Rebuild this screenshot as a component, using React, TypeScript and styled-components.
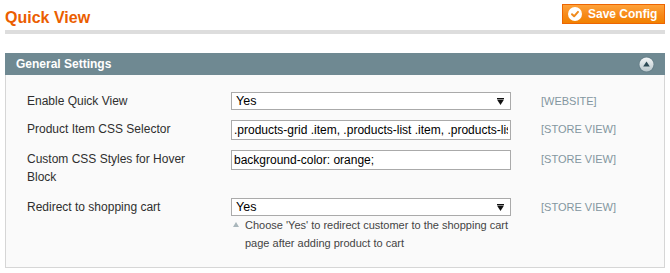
import React from "react";
import styled, { createGlobalStyle } from "styled-components";

const Global = createGlobalStyle`
  html, body { margin: 0; padding: 0; background: #ffffff; }
  body { font-family: "Liberation Sans", Arial, sans-serif; font-size: 12px; color: #2f2f2f; }
`;

const Page = styled.div`
  padding: 0 5px;
`;

const TitleBar = styled.div`
  display: flex;
  justify-content: space-between;
  align-items: flex-start;
  height: 30px;
`;

const Title = styled.h3`
  margin: 0;
  padding-top: 9px;
  font-size: 16px;
  line-height: 18px;
  font-weight: bold;
  color: #eb5e00;
`;

const SaveButton = styled.button`
  margin-top: 4px;
  height: 20px;
  width: 103px;
  box-sizing: border-box;
  display: flex;
  align-items: center;
  gap: 6px;
  padding: 0 0 0 5px;
  border: 1px solid #ed6502;
  background: linear-gradient(to bottom, #fea23a 0%, #f7891a 55%, #f18200 100%);
  color: #ffffff;
  font-family: "Liberation Sans", Arial, sans-serif;
  font-size: 12px;
  font-weight: bold;
  cursor: pointer;
`;

const Rule = styled.div`
  height: 4px;
  background: #dddddd;
`;

const Section = styled.div`
  margin-top: 19px;
`;

const SectionHead = styled.div`
  height: 22px;
  display: flex;
  align-items: center;
  justify-content: space-between;
  padding: 0 10px 0 11px;
  background: #6f8992;
  color: #ffffff;
  font-weight: bold;
  font-size: 12px;
`;

const Fieldset = styled.div`
  background: #fafafa;
  border: 1px solid #d6d6d6;
  border-top: none;
  padding: 17px 0 15px 21px;
  display: grid;
  grid-template-columns: 204px 280px 30px auto;
  row-gap: 10px;
  align-items: start;
`;

const Label = styled.div<{ $wrapped?: boolean }>`
  line-height: 18px;
  font-size: 12px;
  color: #2f2f2f;
  padding-right: 20px;
  padding-bottom: ${(p) => (p.$wrapped ? "2px" : "0")};
`;

const Value = styled.div`
  grid-column: 2;
  display: flex;
  flex-direction: column;
`;

const Scope = styled.div`
  grid-column: 4;
  font-size: 11px;
  line-height: 18px;
  color: #8396a0;
`;

const SelectBox = styled.div`
  height: 18px;
  box-sizing: border-box;
  border: 1px solid #aaaaaa;
  background: #ffffff;
  display: flex;
  align-items: center;
  justify-content: space-between;
  padding: 0 6px 0 4px;
  font-size: 12.5px;
  color: #000000;
`;

const TextInput = styled.input`
  height: 20px;
  width: 280px;
  box-sizing: border-box;
  border: 1px solid #aaaaaa;
  background: #ffffff;
  padding: 0 2px;
  margin: 0;
  font-family: "Liberation Sans", Arial, sans-serif;
  font-size: 12px;
  color: #000000;
  outline: none;
`;

const Note = styled.div`
  display: flex;
  gap: 6px;
  padding-left: 2px;
  font-size: 11px;
  line-height: 18px;
  color: #444444;
`;

const NoteArrow = styled.svg`
  flex: none;
  margin-top: 6px;
`;

const Arrow = () => (
  <svg width="7" height="7" viewBox="0 0 7 7">
    <rect x="0" y="0" width="7" height="1" fill="#111" />
    <path d="M0 1.5 H7 L3.5 7 Z" fill="#111" />
  </svg>
);

const CheckIcon = () => (
  <svg width="14" height="14" viewBox="0 0 14 14">
    <circle cx="7" cy="7" r="7" fill="#ffffff" />
    <path d="M4 7.2 L6.1 9.3 L10 4.9" fill="none" stroke="#f08a1c" strokeWidth="2" strokeLinecap="round" strokeLinejoin="round" />
  </svg>
);

const CollapseIcon = () => (
  <svg width="17" height="17" viewBox="0 0 17 17">
    <defs>
      <linearGradient id="cg" x1="0" y1="0" x2="0" y2="1">
        <stop offset="0" stopColor="#f4f7f8" />
        <stop offset="1" stopColor="#b8c6cb" />
      </linearGradient>
    </defs>
    <circle cx="8.5" cy="8.5" r="8" fill="#5f7a84" opacity="0.5" />
    <circle cx="8.5" cy="8.5" r="7" fill="url(#cg)" />
    <path d="M5.2 10.5 H11.8 L8.5 5.5 Z" fill="#2c4a55" />
  </svg>
);

type Row = {
  label: string;
  scope: string;
  kind: "select" | "input";
  value: string;
  wrapped?: boolean;
  note?: string;
};

const rows: Row[] = [
  { label: "Enable Quick View", scope: "[WEBSITE]", kind: "select", value: "Yes" },
  {
    label: "Product Item CSS Selector",
    scope: "[STORE VIEW]",
    kind: "input",
    value: ".products-grid .item, .products-list .item, .products-list .item",
  },
  {
    label: "Custom CSS Styles for Hover Block",
    scope: "[STORE VIEW]",
    kind: "input",
    value: "background-color: orange;",
    wrapped: true,
  },
  {
    label: "Redirect to shopping cart",
    scope: "[STORE VIEW]",
    kind: "select",
    value: "Yes",
    note: "Choose 'Yes' to redirect customer to the shopping cart page after adding product to cart",
  },
];

export default function App() {
  return (
    <Page>
      <Global />
      <TitleBar>
        <Title>Quick View</Title>
        <SaveButton>
          <CheckIcon />
          Save Config
        </SaveButton>
      </TitleBar>
      <Rule />
      <Section>
        <SectionHead>
          General Settings
          <CollapseIcon />
        </SectionHead>
        <Fieldset>
          {rows.map((r) => (
            <React.Fragment key={r.label}>
              <Label $wrapped={r.wrapped}>{r.label}</Label>
              <Value>
                {r.kind === "select" ? (
                  <SelectBox>
                    {r.value}
                    <Arrow />
                  </SelectBox>
                ) : (
                  <TextInput defaultValue={r.value} readOnly />
                )}
                {r.note && (
                  <Note>
                    <NoteArrow width="6" height="5" viewBox="0 0 6 5">
                      <path d="M0 5 H6 L3 0 Z" fill="#a9b6bb" />
                    </NoteArrow>
                    <span>{r.note}</span>
                  </Note>
                )}
              </Value>
              <Scope>{r.scope}</Scope>
            </React.Fragment>
          ))}
        </Fieldset>
      </Section>
    </Page>
  );
}
